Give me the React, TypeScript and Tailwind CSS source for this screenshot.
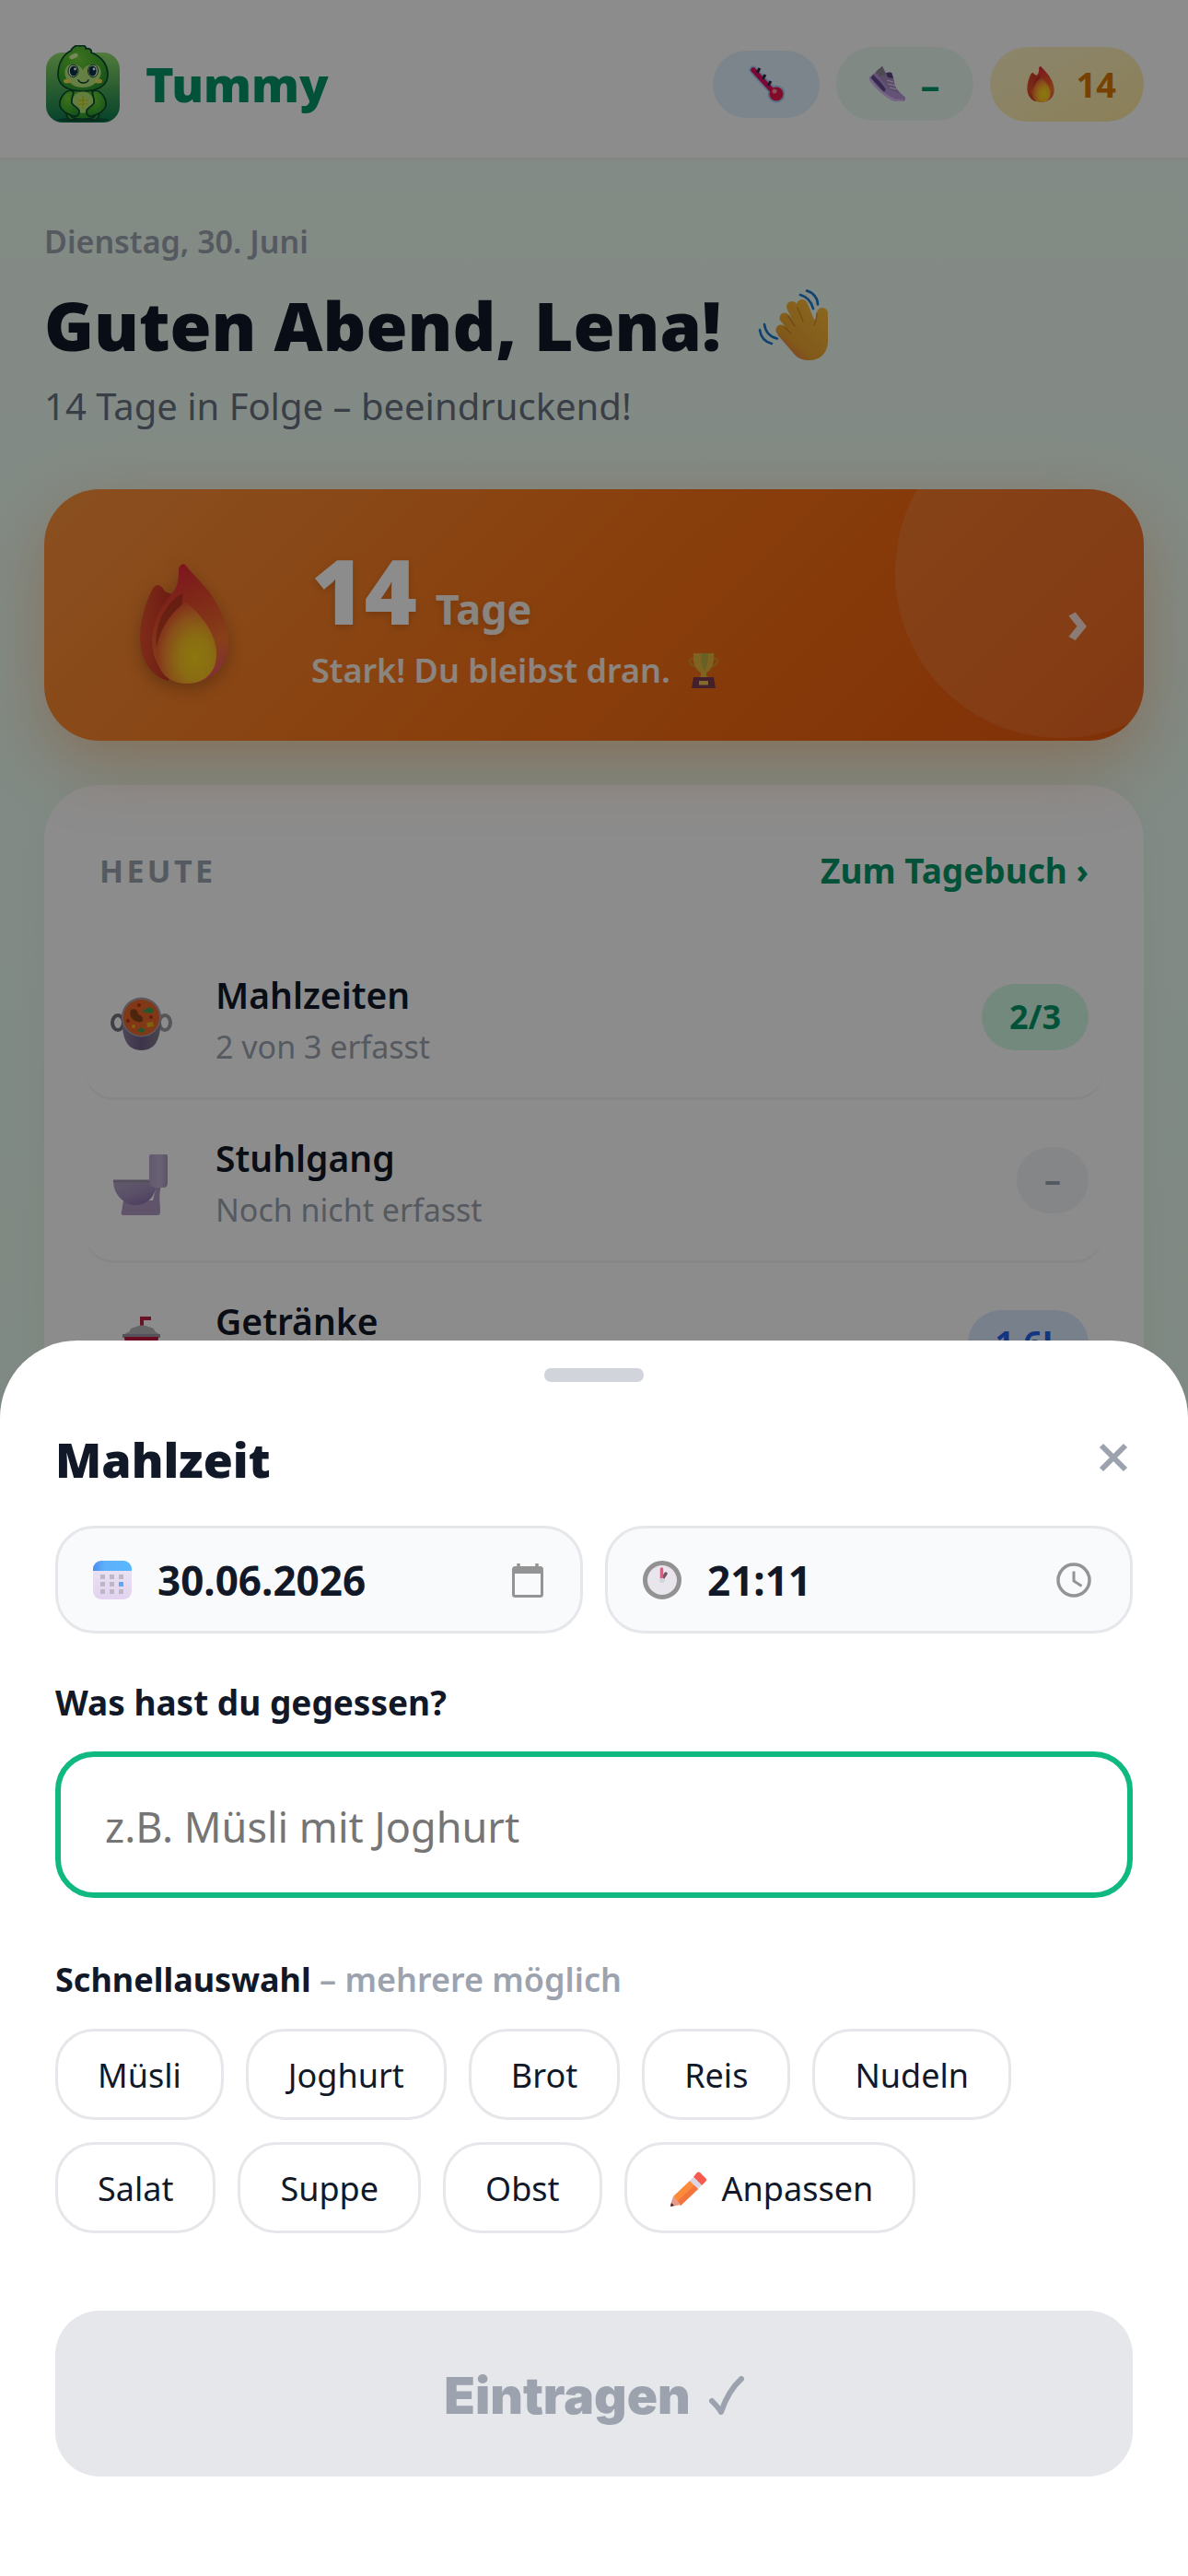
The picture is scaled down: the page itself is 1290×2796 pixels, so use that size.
import { useState } from "react";
import type { ReactNode } from "react";

function Mascot() {
  return (
    <svg viewBox="10 8 80 84" className="h-[84px] w-20 shrink-0" role="img" aria-label="Tummy Maskottchen">
      <defs>
        <linearGradient id="tile" x1="0" y1="0" x2="0" y2="1">
          <stop offset="0" stopColor="#94df6c" />
          <stop offset="0.55" stopColor="#46a557" />
          <stop offset="1" stopColor="#0c7a50" />
        </linearGradient>
        <radialGradient id="skin" cx="0.4" cy="0.3" r="0.8">
          <stop offset="0" stopColor="#6fcf3a" />
          <stop offset="0.6" stopColor="#3fae2e" />
          <stop offset="1" stopColor="#2a9134" />
        </radialGradient>
      </defs>
      <rect x="10" y="16" width="80" height="76" rx="18" fill="url(#tile)" />
      <ellipse cx="50" cy="89" rx="28" ry="2.500" fill="#0a5a3c" />
      <g fill="url(#skin)" stroke="#0b4a2e" strokeWidth="1.700" strokeLinejoin="round">
        <path d="M33 78c-2 6 0 11 5 11s7-4 7-9zM67 78c2 6 0 11-5 11s-7-4-7-9z" />
        <path d="M38 54c-4 8-5 28 0 32 5 3 19 3 24 0 5-4 4-24 0-32z" />
        <path d="M37 14c2-4 6-7 10-5 4-2 7 1 6 3 4-1 7 1 6 4 11 4 18 13 18 24 0 12-11 18-27 18s-27-6-27-18c0-13 6-22 14-26z" />
      </g>
      <ellipse cx="50" cy="70" rx="11.500" ry="11.500" fill="#b6e676" />
      <ellipse cx="50" cy="70" rx="4.500" ry="6" fill="#d9e34a" />
      <path d="M45 68h10M45 72h10M50 63v14" stroke="#a9c93a" strokeWidth="1.200" fill="none" />
      <path
        d="M50 35c4-7 16-9 19-1 3 9-6 20-19 20s-22-11-19-20c3-8 15-6 19 1z"
        fill="#b9e87c"
      />
      <ellipse cx="33" cy="47" rx="4" ry="2.500" fill="#efe058" />
      <ellipse cx="67" cy="47" rx="4" ry="2.500" fill="#efe058" />
      <g>
        <ellipse cx="39.500" cy="36" rx="5.500" ry="6.800" fill="#f2ffe9" stroke="#0b5233" />
        <ellipse cx="61" cy="36" rx="5.500" ry="6.800" fill="#f2ffe9" stroke="#0b5233" />
        <ellipse cx="40" cy="36" rx="4.200" ry="5.500" fill="#0b3040" />
        <ellipse cx="60.500" cy="36" rx="4.200" ry="5.500" fill="#0b3040" />
        <circle cx="41.500" cy="34" r="1.400" fill="#fff" />
        <circle cx="62" cy="34" r="1.400" fill="#fff" />
      </g>
      <path d="M45 46c2 4 9 4 11 0" stroke="#0b3f30" strokeWidth="1.500" fill="none" strokeLinecap="round" />
      <ellipse cx="40" cy="20" rx="5" ry="2.500" transform="rotate(-22 40 20)" fill="#d6f7a0" />
      <g fill="url(#skin)" stroke="#0b4a2e" strokeWidth="1.700" strokeLinejoin="round">
        <path d="M37 57c-8 1-13 10-12 17 2 6 8 9 15 11 4 1 7-2 6-6-1-3-5-4-8-8-1-4 1-8 2-12z" />
        <path d="M63 57c8 1 13 10 12 17-2 6-8 9-15 11-4 1-7-2-6-6 1-3 5-4 8-8 1-4-1-8-2-12z" />
      </g>
    </svg>
  );
}

function Flame({ id, className, viewBox = "0 0 98 130" }: { id: string; className: string; viewBox?: string }) {
  return (
    <svg viewBox={viewBox} className={className} preserveAspectRatio="none" aria-hidden="true">
      <defs>
        <linearGradient id={`${id}-out`} x1="0.3" y1="0" x2="0.6" y2="1">
          <stop offset="0" stopColor="#e8243c" />
          <stop offset="0.35" stopColor="#e84a2c" />
          <stop offset="0.75" stopColor="#f5752c" />
          <stop offset="1" stopColor="#ee5560" />
        </linearGradient>
        <linearGradient id={`${id}-left`} x1="0" y1="0" x2="1" y2="0">
          <stop offset="0" stopColor="#e8502f" />
          <stop offset="1" stopColor="#b5281c" />
        </linearGradient>
        <radialGradient id={`${id}-in`} cx="0.66" cy="0.68" r="0.68">
          <stop offset="0" stopColor="#ffd91c" />
          <stop offset="0.4" stopColor="#fcc522" />
          <stop offset="0.75" stopColor="#f78f2f" />
          <stop offset="1" stopColor="#ee5a32" />
        </radialGradient>
      </defs>
      <path
        d="M20 23c-3 0-6 4-9 12C4 52-1 72 2 92c3 16 13 31 30 35l16-40-8-52-12-5c-2-4-5-7-8-7z"
        fill={`url(#${id}-left)`}
      />
      <path
        d="M48 0c-3 1-5 3-5 8 0 8 0 15-7 24C22 48 14 66 14 84c0 22 14 44 39 46 26-1 44-18 44-44 0-22-12-44-22-57C67 19 57 10 51 2c-1-1-2-2-3-2z"
        fill={`url(#${id}-out)`}
      />
      <path d="M46 46C32 56 22 72 19 92c-2-18 3-34 13-47 5-6 10-11 16-13z" fill="#8f2a16" opacity="0.5" />
      <path
        d="M50 42C34 53 19 76 19 99c0 17 13 31 32 31 21 0 33-13 33-31 0-13-4-23-12-35-6-8-14-18-22-22z"
        fill={`url(#${id}-in)`}
      />
    </svg>
  );
}

function Thermometer() {
  return (
    <svg viewBox="0 0 40 42" className="h-[42px] w-10" aria-hidden="true">
      <path d="M6 6l24 26" stroke="#a9cdf5" strokeWidth="9" strokeLinecap="round" />
      <circle cx="31" cy="32" r="9.500" fill="#a9cdf5" />
      <path d="M6 6l22 24" stroke="#e0105f" strokeWidth="5.500" strokeLinecap="round" />
      <path d="M13 4l-3 5M19 11l-3 5M25 18l-3 5" stroke="#2f2545" strokeWidth="3" />
      <circle cx="31" cy="32" r="7.500" fill="#ec1748" />
      <circle cx="29" cy="29" r="2.500" fill="#ff8ba6" />
    </svg>
  );
}

function Sneaker() {
  return (
    <svg viewBox="0 0 40 38" className="h-[38px] w-10" aria-hidden="true">
      <path d="M14 0c-3 3-9 8-14 12 1 6 15 20 27 26h9c4 0 4-5 1-6C28 24 22 14 14 0z" fill="#b795d9" />
      <path d="M14 0L7 6l13 18 13 6c-4-7-6-9-6-14l-2-8c-2-3-5-2-7 0-2-2-2-5-4-8z" fill="#a78cc0" />
      <path d="M14 0L7 6l4 5 6-2c-1-3-2-6-3-9z" fill="#8b8590" />
      <path d="M4 9l8 8 6 8-2 3L2 13z" fill="#5f4a8c" />
      <path d="M18 7h6l2 6-6-1z" fill="#574482" />
      <path d="M0 13c6 10 18 20 28 24h9" stroke="#d7bdf0" strokeWidth="2.500" fill="none" />
      <path d="M19 15l7 2M20 19l8 2M22 23l8 2" stroke="#e7dcf2" strokeWidth="1.200" />
    </svg>
  );
}

function WavingHand() {
  return (
    <svg viewBox="0 0 78 78" className="size-[78px]" aria-hidden="true">
      <defs>
        <linearGradient id="hand" gradientUnits="userSpaceOnUse" x1="68" y1="20" x2="26" y2="68">
          <stop offset="0" stopColor="#f9b93a" />
          <stop offset="0.75" stopColor="#eca32f" />
          <stop offset="1" stopColor="#e8734e" />
        </linearGradient>
      </defs>
      <g fill="none" stroke="#1f79c9" strokeWidth="2.600" strokeLinecap="round">
        <path d="M46 6c7 2 12 7 14 15M53 1.500c7 2 12 8 12 15" />
        <path d="M7 38c1 8 6 14 14 15.500M2 44c1 8 6 13 13 15" />
      </g>
      <g stroke="url(#hand)" strokeLinecap="round" fill="none">
        <path d="M25 44L46 62" strokeWidth="11" />
        <path d="M29 31L48 54" strokeWidth="11" />
        <path d="M37 19L52 50" strokeWidth="12" />
        <path d="M48 17L60 46" strokeWidth="12" />
        <path d="M70 26L67 50" strokeWidth="12" />
      </g>
      <path d="M34 38l27-6 8 8 7-12v30c-1 12-9 19-20 19-7 0-12-2-16-6L21 49z" fill="url(#hand)" />
      <g stroke="#c97a1c" strokeWidth="1.500" fill="none" strokeLinecap="round" opacity="0.7">
        <path d="M29 41l7 7M33 29l7 11M43 20l6 15" />
        <path d="M64 26c0 6-1 9-3 13" />
      </g>
    </svg>
  );
}

function Trophy() {
  return (
    <svg viewBox="0 0 32 38" className="h-[38px] w-8" aria-hidden="true">
      <path d="M6 6C0 4 0 12 4 13s5 3 7 4M26 6c6-2 6 6 2 7s-5 3-7 4" fill="none" stroke="#d79a2c" strokeWidth="2.200" />
      <path d="M5 0h22c1 10-2 18-8 21v4l4 2H9l4-2v-4C7 18 4 10 5 0z" fill="#e8b53c" />
      <path d="M13 0h8c0 8-1 14-4 19-3-5-4-11-4-19z" fill="#bfb045" />
      <path d="M5 26h22l2 12H3z" fill="#7a3b50" />
      <rect x="11" y="30" width="10" height="4.500" fill="#f0c257" />
    </svg>
  );
}

function Pot() {
  return (
    <svg viewBox="0 0 90 90" className="size-[90px]" aria-hidden="true">
      <defs>
        <linearGradient id="pot" x1="0" y1="0" x2="1" y2="0">
          <stop offset="0" stopColor="#8c82a0" />
          <stop offset="0.5" stopColor="#6f6088" />
          <stop offset="1" stopColor="#85808c" />
        </linearGradient>
      </defs>
      <ellipse cx="20" cy="51" rx="6" ry="8" fill="none" stroke="#77717f" strokeWidth="4" />
      <ellipse cx="71" cy="51" rx="6" ry="8" fill="none" stroke="#a09ba5" strokeWidth="4" />
      <path d="M24.500 46c0 20 4 35 21 35s21-15 21-35z" fill="url(#pot)" />
      <ellipse cx="45.500" cy="45" rx="21.500" ry="21.500" fill="#a9a0ac" />
      <ellipse cx="45.500" cy="45.500" rx="19.500" ry="19.500" fill="#e9662a" />
      <path d="M34 37c5-2 8 1 8 5 3 1 6 3 5 7-3 3-9 1-12-3-2-3-2-6-1-9z" fill="#8d4219" />
      <path d="M45 39l6-3 3-2 5 3-2 4-6-1z" fill="#3f9f52" />
      <path d="M41 60l4-4 5 3-3 3z" fill="#3f9f52" />
      <path d="M51 51l7-1 1 5-7 1z" fill="#e8b11f" />
      <circle cx="37" cy="55" r="2" fill="#f0b323" />
      <circle cx="43" cy="32" r="2" fill="#b5341a" />
      <circle cx="56" cy="45" r="2" fill="#b5341a" />
      <circle cx="31" cy="49" r="2" fill="#b5341a" />
    </svg>
  );
}

function Toilet() {
  return (
    <svg viewBox="0 0 90 90" className="size-[90px]" aria-hidden="true">
      <defs>
        <linearGradient id="tank" x1="0" y1="0" x2="1" y2="0">
          <stop offset="0" stopColor="#b3a3ca" />
          <stop offset="0.6" stopColor="#c2b2d4" />
          <stop offset="1" stopColor="#a798bd" />
        </linearGradient>
        <linearGradient id="bowl" x1="0" y1="0" x2="0.6" y2="1">
          <stop offset="0" stopColor="#b5a7c4" />
          <stop offset="0.6" stopColor="#a491bd" />
          <stop offset="1" stopColor="#8d74ae" />
        </linearGradient>
      </defs>
      <path d="M26 67h32l4-16h5c-3 10-1 18-1 28 0 3-1 4-3 4H27c-3 0-4-1-3-4z" fill="#ad9ac2" />
      <path d="M15 46h42c3 0 6 2 5 5-2 12-10 21-24 21-9 0-23-10-23-26z" fill="url(#bowl)" />
      <path d="M15 46h40" stroke="#9c8faa" strokeWidth="3" />
      <path d="M56 17h16c2 0 2 1 2 3v28c0 4-2 5-5 5h-7c-5 0-8-2-8-7V20c0-2 0-3 2-3z" fill="url(#tank)" />
    </svg>
  );
}

function Cup() {
  return (
    <svg viewBox="0 0 90 90" className="size-[90px]" aria-hidden="true">
      <path d="M46 30V18h10" fill="none" stroke="#c22348" strokeWidth="4" />
      <path d="M33 32c0-3 3-4 7-5 4-2 9-2 13 0 4 1 7 2 7 5l6 4H25z" fill="#b9b9bd" />
      <path d="M25 35h41v4H25z" fill="#9d97a8" />
      <path d="M27 38h37l-4 44H31z" fill="#c2183f" />
    </svg>
  );
}

function CalendarEmoji() {
  const marks = [0, 1, 2, 3, 4, 5, 6, 7, 8];
  return (
    <svg viewBox="0 0 42 42" className="size-[42px] shrink-0" aria-hidden="true">
      <defs>
        <linearGradient id="cal-top" x1="0" y1="0" x2="1" y2="0">
          <stop offset="0" stopColor="#4a8df0" />
          <stop offset="0.3" stopColor="#5fb0fb" />
          <stop offset="1" stopColor="#56b9ff" />
        </linearGradient>
        <linearGradient id="cal-body" x1="0" y1="0" x2="0" y2="1">
          <stop offset="0" stopColor="#ebe6f2" />
          <stop offset="1" stopColor="#e2d3f1" />
        </linearGradient>
      </defs>
      <rect width="42" height="42" rx="9" fill="url(#cal-body)" />
      <path d="M0 11V9a9 9 0 0 1 9-9h24a9 9 0 0 1 9 9v2z" fill="url(#cal-top)" />
      {marks.map((m) => (
        <rect
          key={m}
          x={8 + (m % 3) * 10}
          y={15 + Math.floor(m / 3) * 8}
          width="5"
          height="5"
          fill={m === 5 ? "#5aa9f5" : "#bdb8c4"}
        />
      ))}
    </svg>
  );
}

function ClockEmoji() {
  return (
    <svg viewBox="0 0 42 42" className="size-[42px] shrink-0" aria-hidden="true">
      <circle cx="21" cy="21" r="18.500" fill="#e9e5ec" stroke="#929292" strokeWidth="5" />
      <path d="M21 20l4-6" stroke="#6e5663" strokeWidth="3.500" strokeLinecap="round" />
      <path d="M20.500 19V9" stroke="#e8557f" strokeWidth="3.500" strokeLinecap="round" />
      <circle cx="21" cy="21.500" r="2.700" fill="#cfd6d9" />
    </svg>
  );
}

function DatePickerIcon() {
  return (
    <svg viewBox="0 0 34 38" className="h-[38px] w-[34px] shrink-0" aria-hidden="true">
      <path d="M7 1v6M27 1v6" stroke="#949494" strokeWidth="3.500" />
      <rect x="1.500" y="5.500" width="31" height="31" rx="2" fill="none" stroke="#949494" strokeWidth="3" />
      <path d="M1 5h32v7H1z" fill="#949494" />
    </svg>
  );
}

function TimePickerIcon() {
  return (
    <svg viewBox="0 0 38 38" className="size-[38px] shrink-0" fill="none" stroke="#949494" aria-hidden="true">
      <circle cx="19" cy="19" r="17" strokeWidth="3.500" />
      <path d="M19 9.500V20l8.500 5.500" strokeWidth="3" />
    </svg>
  );
}

function Pencil() {
  return (
    <svg viewBox="0 0 40 38" className="h-[38px] w-10" aria-hidden="true">
      <path d="M28 2c2-2 3-2 5 0l5 5c2 2 1 3 0 4l-4 4-9-9z" fill="#f65a4e" />
      <path d="M21 10l4-4 9 9-4 4z" fill="#dcd5e6" />
      <path d="M3 27L21 10l9 9-19 18z" fill="#fb8a3a" />
      <path d="M8 32L26 15l4 4-19 18z" fill="#f2743e" />
      <path d="M3 27l8 9-10 2c-1 0-1-1-1-2z" fill="#e59a8c" />
      <path d="M1 34l3 3-4 1z" fill="#43263b" />
    </svg>
  );
}

function Row({
  icon,
  title,
  sub,
  badge,
  tone,
}: {
  icon: ReactNode;
  title: string;
  sub: string;
  badge: string;
  tone: string;
}) {
  return (
    <button
      type="button"
      className="flex h-[177px] items-center gap-9 rounded-[30px] border-b-[3px] border-[#f3f4f6] px-[15px] text-left"
    >
      {icon}
      <span className="flex min-w-0 flex-1 flex-col gap-1 pt-[3px]">
        <span className="text-[39px] leading-[56px] font-semibold text-[#111827]">{title}</span>
        <span className="text-[34px] leading-[48px] text-[#9ca3af]">{sub}</span>
      </span>
      <span className={`rounded-full px-[30px] text-[36px] leading-[72px] font-bold ${tone}`}>{badge}</span>
    </button>
  );
}

const foods = ["Müsli", "Joghurt", "Brot", "Reis", "Nudeln", "Salat", "Suppe", "Obst"];

const chip =
  "flex h-[99px] items-center rounded-[42px] border-[3px] border-[#e5e7eb] bg-white px-[43px] pt-[3px] text-[36px] text-[#111827]";

export default function App() {
  const [meal, setMeal] = useState("");
  const [date, setDate] = useState("30.06.2026");
  const [time, setTime] = useState("21:11");

  return (
    <div className="relative h-screen overflow-hidden bg-linear-to-b from-[#f0fdf4] to-[#e2f8ea] font-['Noto_Sans','Open_Sans',sans-serif] text-[#111827]">
      <header className="flex items-center justify-between border-b-[3px] border-[#f0f5f0] bg-white px-12 pt-[49px] pb-[38px]">
        <div className="flex items-center gap-7 pl-[2px]">
          <Mascot />
          <span className="text-[52px] leading-[72px] font-black text-[#059669]">Tummy</span>
        </div>
        <div className="flex items-center gap-[18px]">
          <button
            type="button"
            aria-label="Symptome"
            className="flex h-[73px] items-center rounded-full bg-[#e0f2fe] px-[38px]"
          >
            <Thermometer />
          </button>
          <button
            type="button"
            aria-label="Schritte"
            className="flex h-20 items-center gap-4 rounded-full bg-[#ebfaf2] px-9 text-[42px] font-bold text-[#059669]"
          >
            <Sneaker />
            <span>–</span>
          </button>
          <button
            type="button"
            aria-label="Serie"
            className="flex h-[81px] items-center gap-6 rounded-full bg-linear-to-br from-[#fef3c7] to-[#fde9a0] pr-[30px] pl-10 text-[38px] font-bold text-[#d97706]"
          >
            <Flame id="pill-flame" className="h-[39px] w-[30px]" />
            <span>14</span>
          </button>
        </div>
      </header>

      <main className="flex flex-col px-12 pt-16">
        <p className="text-[34px] leading-[48px] font-semibold text-[#9ca3af]">Dienstag, 30. Juni</p>
        <h1 className="mt-[19px] flex items-center gap-10 text-[73px] leading-[96px] font-black">
          Guten Abend, Lena!
          <WavingHand />
        </h1>
        <p className="mt-3 text-[40px] leading-[56px] text-[#6b7280]">14 Tage in Folge – beeindruckend!</p>

        <button
          type="button"
          className="relative mt-[62px] flex h-[273px] items-center gap-[72px] overflow-hidden rounded-[60px] bg-linear-[135deg] from-[#fb923c] via-[#f97316] to-[#ea580c] pt-2 pr-[60px] pl-[86px] text-left text-white shadow-[0_24px_72px_rgba(249,115,22,0.35)]"
        >
          <span className="absolute -top-[90px] -right-[90px] size-[360px] rounded-full bg-white/10" />
          <Flame
            id="hero-flame"
            viewBox="-17 -12 132 144"
            className="h-36 w-[132px] overflow-visible drop-shadow-[0_6px_9px_rgba(0,0,0,0.25)]"
          />
          <span className="flex flex-1 flex-col gap-3">
            <span className="flex items-baseline gap-5 text-shadow-[0_3px_9px_rgba(0,0,0,0.15)]">
              <span className="text-[98px] leading-[100px] font-black">14</span>
              <span className="text-[45px] leading-none font-bold text-white/90">Tage</span>
            </span>
            <span className="flex items-center gap-5 text-[36px] leading-[52px] font-semibold text-white/90">
              Stark! Du bleibst dran.
              <Trophy />
            </span>
          </span>
          <span className="relative text-[66px] leading-[66px] font-bold text-white/80">›</span>
        </button>

        <section className="mt-12 flex flex-col rounded-[60px] bg-white px-[45px] pt-[66px] pb-12 shadow-[0_6px_36px_rgba(0,0,0,0.04)]">
          <div className="flex items-center justify-between px-[15px] pb-[45px] leading-[54px] font-bold">
            <h2 className="text-[34px] tracking-widest text-[#9ca3af]">HEUTE</h2>
            <a href="#tagebuch" className="text-[37px] text-[#059669]">
              Zum Tagebuch ›
            </a>
          </div>
          <Row
            icon={<Pot />}
            title="Mahlzeiten"
            sub="2 von 3 erfasst"
            badge="2/3"
            tone="bg-[#d1fae5] text-[#059669]"
          />
          <Row
            icon={<Toilet />}
            title="Stuhlgang"
            sub="Noch nicht erfasst"
            badge="–"
            tone="bg-[#f3f4f6] text-[#9ca3af]"
          />
          <Row
            icon={<Cup />}
            title="Getränke"
            sub="1.6L von 2L"
            badge="1.6L"
            tone="bg-[#dbeafe] text-[#2563eb]"
          />
        </section>
      </main>

      <div className="fixed inset-0 bg-black/45" />

      <section
        role="dialog"
        aria-label="Mahlzeit"
        className="fixed inset-x-0 bottom-0 flex flex-col rounded-t-[84px] bg-white px-[60px] pt-[30px] pb-[108px]"
      >
        <div className="h-[15px] w-[108px] self-center rounded-[7px] bg-[#d1d5db]" />
        <div className="mt-12 flex items-center justify-between">
          <h2 className="text-[52px] leading-[72px] font-black">Mahlzeit</h2>
          <button type="button" aria-label="Schließen" className="flex h-[72px] items-center pr-1 pb-1">
            <svg viewBox="0 0 34 34" className="size-[34px]" aria-hidden="true">
              <path d="M4 4l26 26M30 4L4 30" stroke="#9ca3af" strokeWidth="6" />
            </svg>
          </button>
        </div>

        <div className="mt-9 grid grid-cols-2 gap-6">
          <label className="flex h-[117px] items-center gap-7 rounded-[42px] border-[3px] border-[#e5e7eb] bg-[#f9fafb] pr-10 pl-[38px]">
            <CalendarEmoji />
            <input
              type="text"
              aria-label="Datum"
              value={date}
              onChange={(e) => setDate(e.target.value)}
              className="w-0 min-w-0 flex-1 bg-transparent text-[44px] leading-[56px] font-bold outline-none"
            />
            <DatePickerIcon />
          </label>
          <label className="flex h-[117px] items-center gap-7 rounded-[42px] border-[3px] border-[#e5e7eb] bg-[#f9fafb] pr-[42px] pl-[38px]">
            <ClockEmoji />
            <input
              type="text"
              aria-label="Uhrzeit"
              value={time}
              onChange={(e) => setTime(e.target.value)}
              className="w-0 min-w-0 flex-1 bg-transparent text-[44px] leading-[56px] font-bold outline-none"
            />
            <TimePickerIcon />
          </label>
        </div>

        <label htmlFor="meal" className="mt-12 text-[37px] leading-[54px] font-bold">
          Was hast du gegessen?
        </label>
        <input
          id="meal"
          type="text"
          value={meal}
          onChange={(e) => setMeal(e.target.value)}
          placeholder="z.B. Müsli mit Joghurt"
          className="mt-[26px] h-[159px] rounded-[42px] border-[6px] border-[#10b981] bg-white px-12 pt-[3px] text-[45px] outline-none placeholder:text-[#757575]"
        />

        <p className="mt-16 text-[36px] leading-[50px] font-bold">
          Schnellauswahl <span className="font-semibold text-[#9ca3af]">– mehrere möglich</span>
        </p>
        <div className="mt-7 flex flex-wrap gap-6">
          {foods.map((food) => (
            <button key={food} type="button" className={chip} onClick={() => setMeal(food)}>
              {food}
            </button>
          ))}
          <button type="button" className={chip}>
            <span className="mr-4 ml-1">
              <Pencil />
            </span>
            Anpassen
          </button>
        </div>

        <button
          type="button"
          disabled
          className="mt-[84px] flex h-[180px] items-center justify-center gap-5 rounded-[48px] bg-[#e5e7eb] pt-1 font-['Inter','Liberation_Sans',sans-serif] text-[55px] font-black text-[#9ca3af]"
        >
          Eintragen
          <svg viewBox="0 0 38 42" className="h-[42px] w-[38px]" aria-hidden="true">
            <path
              d="M3 27c3 3 7 7 10 12C18 24 25 12 35 3"
              fill="none"
              stroke="currentColor"
              strokeWidth="6"
              strokeLinecap="round"
              strokeLinejoin="round"
            />
          </svg>
        </button>
      </section>
    </div>
  );
}
